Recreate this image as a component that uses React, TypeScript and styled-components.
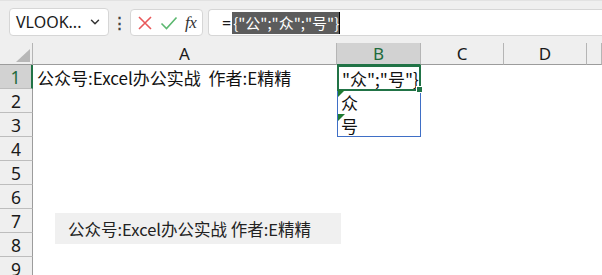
import styled, { createGlobalStyle } from "styled-components"
import { ChevronDown } from "lucide-react"

const GlobalStyle = createGlobalStyle`
    body {
        margin: 0;
        background: #ffffff;
        font-family: "Noto Sans", "Noto Sans CJK SC", sans-serif;
        overflow: hidden;
    }
`

const Page = styled.div`
    position: relative;
    width: 602px;
    height: 275px;
    overflow: hidden;
    background: #ffffff;
`

const Toolbar = styled.div`
    height: 43px;
    box-sizing: border-box;
    padding: 8px 0 0 9px;
    background: #efefef;
    display: flex;
    align-items: flex-start;
    border-top: 1px solid #e2e2e2;
`

const Box = styled.div<{ $width?: number }>`
    height: 27px;
    box-sizing: border-box;
    background: #ffffff;
    border: 1px solid #d6d6d6;
    border-radius: 4px;
    display: flex;
    align-items: center;
    ${(p) => (p.$width ? `width: ${p.$width}px;` : "flex: 1;")}
`

const NameBox = styled(Box)`
    padding: 0 6px 0 6px;
    justify-content: space-between;
    font-size: 16px;
    color: #1a1a1a;
    margin-top: -1px;
    height: 28px;
`

const Dots = styled.div`
    width: 21px;
    text-align: center;
    font-size: 15px;
    line-height: 27px;
    color: #444;
    font-weight: bold;
`

const IconButtons = styled(Box)`
    justify-content: space-around;
    padding: 0 2px;
    margin-right: 5px;
`

const Fx = styled.span`
    font-family: "Liberation Serif", serif;
    font-style: italic;
    font-size: 17px;
    color: #333;
    letter-spacing: -0.5px;
`

const FormulaBox = styled(Box)`
    border-right: none;
    border-radius: 4px 0 0 4px;
    padding-left: 13px;
    font-size: 16px;
    color: #1a1a1a;
`

const Selected = styled.span`
    background: #5c5c5c;
    color: #ffffff;
    line-height: 22px;
    padding: 0 0 0 1px;
    border-right: 1px solid #000;
    font-family: "Noto Sans CJK SC", sans-serif;
    font-size: 15px;
`

const Sheet = styled.div`
    display: grid;
    grid-template-columns: 33px 304px 84px 83px 83px 1fr;
    grid-template-rows: 22px repeat(9, 24px);
    background: #ffffff;
`

const Corner = styled.div`
    background: #efefef;
    border-right: 1px solid #b5b5b5;
    border-bottom: 1px solid #9c9c9c;
    box-sizing: border-box;
    position: relative;
    &::after {
        content: "";
        position: absolute;
        right: 2px;
        bottom: 2px;
        width: 0;
        height: 0;
        border-left: 14px solid transparent;
        border-bottom: 13px solid #b7b7b7;
    }
`

const ColHead = styled.div<{ $active?: boolean }>`
    box-sizing: border-box;
    background: ${(p) => (p.$active ? "#d2d2d2" : "#efefef")};
    color: ${(p) => (p.$active ? "#1e6b3c" : "#1a1a1a")};
    border-right: 1px solid #b5b5b5;
    border-bottom: 1px solid ${(p) => (p.$active ? "#217346" : "#9c9c9c")};
    display: flex;
    align-items: center;
    justify-content: center;
    font-size: 17px;
    font-family: "Noto Sans", sans-serif;
`

const RowHead = styled.div<{ $active?: boolean }>`
    box-sizing: border-box;
    grid-column: 1;
    background: ${(p) => (p.$active ? "#d2d2d2" : "#efefef")};
    color: ${(p) => (p.$active ? "#1e6b3c" : "#1a1a1a")};
    border-right: ${(p) => (p.$active ? "2px solid #217346" : "1px solid #9c9c9c")};
    border-bottom: 1px solid #bdbdbd;
    display: flex;
    align-items: center;
    justify-content: center;
    font-size: 17.5px;
    font-family: "Noto Sans", sans-serif;
`

const Cell = styled.div`
    box-sizing: border-box;
    padding-left: 4px;
    display: flex;
    align-items: center;
    font-size: 17px;
    color: #111;
    white-space: pre;
    font-family: "Noto Sans CJK SC", sans-serif;
`

const Spill = styled.div`
    grid-column: 3;
    grid-row: 2 / 5;
    box-sizing: border-box;
    border: 1px solid #3f6fc6;
    display: grid;
    grid-template-rows: 24px 24px 23px;
`

const SpillCell = styled(Cell)<{ $flag?: boolean }>`
    position: relative;
    padding-left: 3px;
    &::before {
        content: "";
        display: ${(p) => (p.$flag ? "block" : "none")};
        position: absolute;
        left: 0;
        top: 0;
        border-top: 7px solid #1e7a32;
        border-right: 7px solid transparent;
    }
`

const ActiveCell = styled(Cell)`
    margin: -1px;
    border: 2px solid #217346;
    padding-left: 3px;
    position: relative;
    &::after {
        content: "";
        position: absolute;
        right: -4px;
        bottom: -4px;
        width: 5px;
        height: 5px;
        background: #217346;
        border: 1px solid #ffffff;
    }
`

const Floating = styled.div`
    position: absolute;
    left: 55px;
    top: 213px;
    width: 286px;
    height: 31px;
    background: #f0f0f0;
    box-sizing: border-box;
    padding-left: 13px;
    display: flex;
    align-items: center;
    font-size: 16.5px;
    color: #222;
    font-family: "Noto Sans CJK SC", sans-serif;
    white-space: nowrap;
`

const TEXT = "公众号:Excel办公实战  作者:E精精"

const App = () => {
    const cols = ["A", "B", "C", "D", ""]
    const rows = [1, 2, 3, 4, 5, 6, 7, 8, 9]
    return (
        <Page>
            <GlobalStyle />
            <Toolbar>
                <NameBox $width={100}>
                    <span>VLOOK...</span>
                    <ChevronDown size={14} strokeWidth={2.5} color="#333" />
                </NameBox>
                <Dots>⋮</Dots>
                <IconButtons $width={73}>
                    <svg width="16" height="16" viewBox="0 0 16 16">
                        <path d="M2 2 L14 14 M14 2 L2 14" stroke="#e8585a" strokeWidth="1.6" fill="none" />
                    </svg>
                    <svg width="18" height="16" viewBox="0 0 18 16">
                        <path d="M1.5 8.5 L6.5 13.5 L16.5 2.5" stroke="#5cb870" strokeWidth="1.6" fill="none" />
                    </svg>
                    <Fx>fx</Fx>
                </IconButtons>
                <FormulaBox>
                    <span style={{ marginRight: 1 }}>=</span>
                    <Selected>{'{"公";"众";"号"}'}</Selected>
                </FormulaBox>
            </Toolbar>
            <Sheet>
                <Corner />
                {cols.map((c) => (
                    <ColHead key={c || "e"} $active={c === "B"}>{c}</ColHead>
                ))}
                {rows.map((r) => (
                    <RowHead key={r} $active={r === 1} style={{ gridRow: r + 1 }}>{r}</RowHead>
                ))}
                <Cell style={{ gridColumn: 2, gridRow: 2 }}>{TEXT}</Cell>
                <Spill>
                    <ActiveCell>{'"众";"号"}'}</ActiveCell>
                    <SpillCell $flag>众</SpillCell>
                    <SpillCell $flag>号</SpillCell>
                </Spill>
            </Sheet>
            <Floating>{TEXT}</Floating>
        </Page>
    )
}

export default App
